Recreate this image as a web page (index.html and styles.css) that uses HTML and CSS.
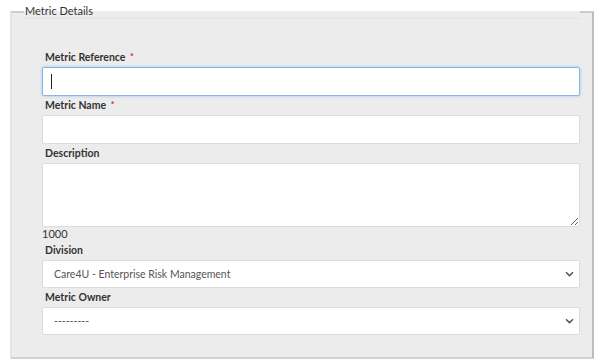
FILE: index.html
```html
<!DOCTYPE html>
<html lang="en">
<head>
    <meta charset="UTF-8">
    <meta name="viewport" content="width=device-width, initial-scale=1.0">
    <title>Metric Details</title>
    <link rel="stylesheet" href="styles.css">
</head>
<body>
    <!-- Metric details form -->
    <fieldset class="metric-details">
        <legend class="metric-legend">Metric Details</legend>
        <div class="form-body">
            <div class="field">
                <label class="field-label" for="metricRef">Metric Reference <span class="req">*</span></label>
                <div class="input-wrap">
                    <input class="field-input is-focused" id="metricRef" type="text">
                    <span class="caret"></span>
                </div>
            </div>

            <div class="field">
                <label class="field-label" for="metricName">Metric Name <span class="req">*</span></label>
                <input class="field-input" id="metricName" type="text">
            </div>

            <div class="field">
                <label class="field-label" for="metricDesc">Description</label>
                <textarea class="field-textarea" id="metricDesc"></textarea>
                <div class="char-count">1000</div>
            </div>

            <div class="field">
                <label class="field-label" for="division">Division</label>
                <div class="select-wrap">
                    <select class="field-select" id="division">
                        <option>Care4U - Enterprise Risk Management</option>
                    </select>
                    <svg class="chevron" width="9" height="6" viewBox="0 0 9 6"><path d="M1 1.2 L4.5 4.6 L8 1.2" fill="none" stroke="#555" stroke-width="1.5"/></svg>
                </div>
            </div>

            <div class="field">
                <label class="field-label" for="owner">Metric Owner</label>
                <div class="select-wrap">
                    <select class="field-select" id="owner">
                        <option>---------</option>
                    </select>
                    <svg class="chevron" width="9" height="6" viewBox="0 0 9 6"><path d="M1 1.2 L4.5 4.6 L8 1.2" fill="none" stroke="#555" stroke-width="1.5"/></svg>
                </div>
            </div>
        </div>
    </fieldset>
</body>
</html>
```

FILE: styles.css
```css
body {
    margin: 4px 8px 0;
    padding: 0;
    font-family: Lato, "Open Sans", sans-serif;
    color: #333;
}

/* Fieldset box */
.metric-details {
    margin: 0 2px;
    padding: 0 12px 22px;
    border-style: solid;
    border-width: 2px;
    border-color: #cdcdcd #bdbdbd #d2d2d2 #e6e6e6;
    background-color: #ececec;
}

.metric-legend {
    display: block;
    width: 100%;
    box-sizing: border-box;
    padding: 0 1px;
    font-size: 11px;
    line-height: 14px;
    color: #333;
    border-bottom: 1px solid #e2e2e2;
}

.form-body {
    padding: 30px 0 0 18px;
    display: flex;
    flex-direction: column;
    gap: 1px;
}

.field {
    display: flex;
    flex-direction: column;
}

.field-label {
    padding-left: 3px;
    margin-bottom: 2px;
    font-size: 10.5px;
    font-weight: bold;
    line-height: 16px;
    color: #333;
}

.req {
    color: #e8191c;
    font-size: 9px;
    vertical-align: top;
    margin-left: 2px;
}

.field-input,
.field-textarea,
.field-select {
    box-sizing: border-box;
    width: 100%;
    margin: 0;
    border: 1px solid #dcdcdc;
    border-radius: 2px;
    background-color: #fff;
    font-family: Lato, "Open Sans", sans-serif;
    font-size: 10.5px;
    color: #555;
    outline: none;
}

.field-input {
    display: block;
    height: 29px;
    padding: 0 8px;
}

.field-input.is-focused {
    border-color: #85b8ea;
    box-shadow: 0 0 3px rgba(102, 160, 230, 0.6);
}

.input-wrap {
    position: relative;
}

/* text caret of the focused input */
.caret {
    position: absolute;
    left: 9px;
    top: 7px;
    width: 1px;
    height: 15px;
    background-color: #222;
}

.field-textarea {
    display: block;
    height: 64px;
    padding: 6px 8px;
    resize: both;
}

.char-count {
    font-size: 11px;
    line-height: 14px;
    color: #333;
}

.select-wrap {
    position: relative;
}

.field-select {
    display: block;
    height: 28px;
    padding: 0 28px 0 11px;
    appearance: none;
    -webkit-appearance: none;
}

.chevron {
    position: absolute;
    right: 6px;
    top: 11px;
    pointer-events: none;
}
```
